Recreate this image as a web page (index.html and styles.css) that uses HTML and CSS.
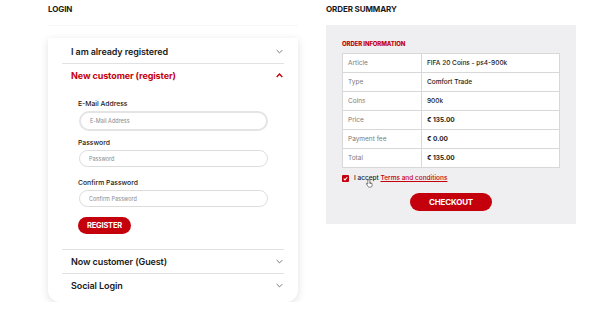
FILE: index.html
```html
<!DOCTYPE html>
<html lang="en">
<head>
  <meta charset="UTF-8">
  <title>Checkout</title>
  <link rel="stylesheet" href="styles.css">
</head>
<body>
  <div class="page">
    <section class="col">
      <h2 class="title">LOGIN</h2>
      <div class="card-wrap">
        <div class="card">
          <div class="acc-head first">
            <span>I am already registered</span>
            <svg class="chev" viewBox="0 0 10 6"><path d="M1 1l4 4 4-4" /></svg>
          </div>
          <div class="acc-head open">
            <span>New customer (register)</span>
            <svg class="chev" viewBox="0 0 10 6"><path d="M1 5l4-4 4 4" /></svg>
          </div>
          <div class="acc-body">
            <label>E-Mail Address</label>
            <input class="field big" placeholder="E-Mail Address">
            <label>Password</label>
            <input class="field" placeholder="Password">
            <label class="spaced">Confirm Password</label>
            <input class="field" placeholder="Confirm Password">
            <button class="btn small">REGISTER</button>
          </div>
          <div class="acc-head line">
            <span>Now customer (Guest)</span>
            <svg class="chev" viewBox="0 0 10 6"><path d="M1 1l4 4 4-4" /></svg>
          </div>
          <div class="acc-head last">
            <span>Social Login</span>
            <svg class="chev" viewBox="0 0 10 6"><path d="M1 1l4 4 4-4" /></svg>
          </div>
        </div>
      </div>
    </section>

    <section class="col">
      <h2 class="title">ORDER SUMMARY</h2>
      <div class="summary">
        <h3 class="sub">ORDER INFORMATION</h3>
        <table class="info">
          <tr><td>Article</td><td>FIFA 20 Coins - ps4-900k</td></tr>
          <tr><td>Type</td><td>Comfort Trade</td></tr>
          <tr><td>Coins</td><td>900k</td></tr>
          <tr><td>Price</td><td><b>€ 135.00</b></td></tr>
          <tr><td>Payment fee</td><td><b>€ 0.00</b></td></tr>
          <tr><td>Total</td><td><b>€ 135.00</b></td></tr>
        </table>
        <div class="accept">
          <span class="check">
            <svg viewBox="0 0 8 8"><path d="M2 4.2l1.4 1.4L6 2.6" /></svg>
          </span>
          <span class="accept-text">I accept <a href="#">Terms and conditions</a>
            <svg class="cursor" viewBox="0 0 10 11"><path d="M3.5 1v5.2l-1-.9c-.5-.4-1.1.1-.8.6l2.1 3.4c.3.4.7.7 1.3.7h2.2c.9 0 1.5-.7 1.5-1.6V5.6c0-.5-.8-.6-.9 0v.2-.9c0-.5-.8-.6-.9 0v.6-1c0-.5-.8-.6-.9 0v.8V1c0-.6-1-.6-1 0z" /></svg>
          </span>
        </div>
        <div class="center">
          <button class="btn wide">CHECKOUT</button>
        </div>
      </div>
    </section>
  </div>
</body>
</html>
```

FILE: styles.css
```css
body {
  margin: 0;
  background: #fff;
  color: #1a1a1a;
  font-family: Inter, "Noto Sans", sans-serif;
}

.page {
  display: flex;
  gap: 28px;
  padding-left: 48px;
}

.col {
  width: 250px;
}

.title {
  margin: 4px 0 0;
  font-size: 8px;
  font-weight: 700;
  letter-spacing: -0.1px;
  line-height: 10px;
}

/* Login card */
.card-wrap {
  margin-top: 11px;
  padding-top: 12px;
  border-top: 1px solid #f7f7f7;
}

.card {
  padding: 0 14px 5px;
  background: #fff;
  border-radius: 2px 2px 12px 12px;
  box-shadow: 0 2px 8px rgba(0, 0, 0, 0.12);
}

.acc-head {
  display: flex;
  justify-content: space-between;
  align-items: center;
  height: 23px;
  padding: 0 1px 0 9px;
  font-size: 9px;
  font-weight: 600;
  letter-spacing: -0.1px;
  border-bottom: 1px solid #e2e2e2;
}

.acc-head.first {
  height: 24px;
  padding-top: 1px;
}

.acc-head.open {
  color: #c4000c;
  font-weight: 700;
  border-bottom: none;
}

.acc-head.line {
  border-top: 1px solid #e2e2e2;
}

.acc-head.last {
  border-bottom: none;
}

.chev {
  width: 7px;
  height: 5px;
  fill: none;
  stroke: #777;
  stroke-width: 1.4;
}

.open .chev {
  stroke: #c4000c;
  stroke-width: 2;
}

.acc-body {
  display: flex;
  flex-direction: column;
  align-items: flex-start;
  padding: 12px 16px 15px;
}

label {
  font-size: 6.8px;
  font-weight: 500;
  line-height: 9px;
  margin-bottom: 3px;
}

label.spaced {
  margin-top: 5px;
}

.field {
  box-sizing: border-box;
  width: 189px;
  height: 17px;
  margin: 0 0 6px 1px;
  padding: 0 9px;
  border: 1px solid #dcdcdc;
  border-radius: 10px;
  font-family: inherit;
  font-size: 5.5px;
  color: #333;
}

.field.big {
  height: 20px;
  border: 2px solid #e4e4e4;
  margin-bottom: 7px;
}

.field::placeholder {
  color: #8a8a8a;
}

.btn {
  border: none;
  background: #c4000c;
  color: #fff;
  font-family: inherit;
  font-weight: 700;
  border-radius: 10px;
  letter-spacing: -0.2px;
}

.btn.small {
  margin-top: 4px;
  width: 53px;
  height: 17px;
  font-size: 7.5px;
}

/* Order summary */
.summary {
  margin-top: 11px;
  height: 199px;
  box-sizing: border-box;
  background: #efeef0;
  padding: 15px 16px 0;
}

.sub {
  margin: 0 0 6px;
  color: #c4000c;
  font-size: 6px;
  font-weight: 800;
  letter-spacing: -0.1px;
}

.info {
  width: 218px;
  border-collapse: collapse;
  background: #fff;
  font-size: 6.5px;
}

.info td {
  height: 18px;
  padding: 0 5px;
  border: 1px solid #d8d8d8;
}

.info td:first-child {
  width: 68px;
  color: #7a7a7a;
}

.info td:last-child {
  color: #222;
  font-weight: 500;
}

.info b {
  font-weight: 700;
}

.accept {
  display: flex;
  align-items: center;
  gap: 5px;
  margin-top: 6px;
  font-size: 6.5px;
  font-weight: 500;
}

.check {
  width: 7px;
  height: 7px;
  background: #c4000c;
  border-radius: 1px;
}

.check svg {
  display: block;
  width: 7px;
  height: 7px;
  fill: none;
  stroke: #fff;
  stroke-width: 1.2;
}

.accept-text {
  position: relative;
}

.accept a {
  color: #c4000c;
}

.cursor {
  position: absolute;
  left: 11px;
  top: 5px;
  width: 8px;
  height: 9px;
  fill: #fff;
  stroke: #444;
  stroke-width: 0.8;
}

.center {
  display: flex;
  justify-content: center;
  margin-top: 11px;
}

.btn.wide {
  width: 82px;
  height: 18px;
  font-size: 8px;
}
```
